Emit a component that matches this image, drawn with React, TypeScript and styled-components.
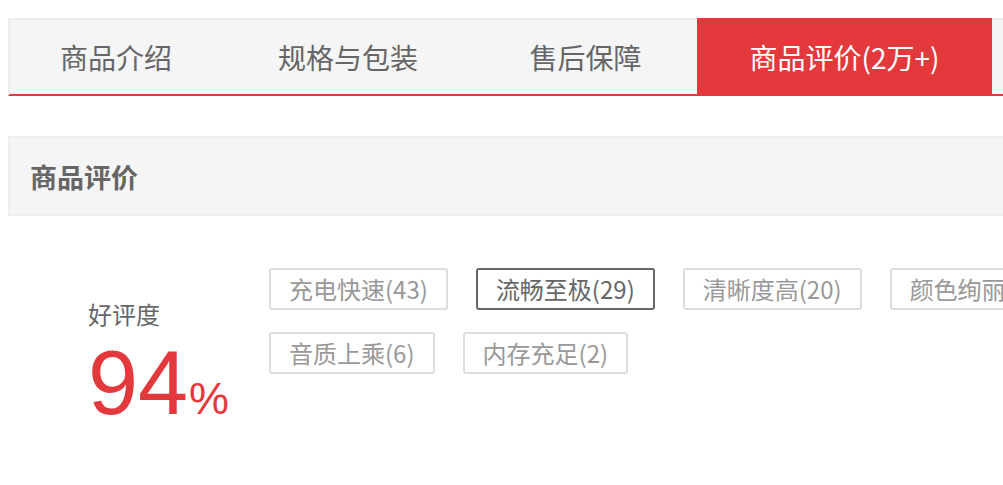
import styled, { createGlobalStyle } from 'styled-components'

const GlobalStyle = createGlobalStyle`
	html, body {
		margin: 0;
		padding: 0;
		background: #fff;
		overflow: hidden;
	}
	body {
		font-family: "Noto Sans CJK SC", "Microsoft YaHei", sans-serif;
		color: #666;
	}
`

const red = '#e4393c'

const Page = styled.div`
	width: 1190px;
	padding: 18px 0 0 8px;
`

const TabBar = styled.ul`
	display: flex;
	margin: 0;
	padding: 0;
	list-style: none;
	background: #f5f5f5;
	border-left: 2px solid #eee;
	border-bottom: 2px solid ${red};
`

interface TabProps {
	$w: number
	$active?: boolean
}

const Tab = styled.li<TabProps>`
	width: ${({ $w }) => $w}px;
	height: 74px;
	border-top: 2px solid ${({ $active }) => ($active ? red : '#eee')};
	background: ${({ $active }) => ($active ? red : 'transparent')};
	color: ${({ $active }) => ($active ? '#fff' : '#666')};
	font-size: 28px;
	line-height: 74px;
	text-align: center;
	white-space: nowrap;
	cursor: pointer;
`

const TabFill = styled.li`
	flex: 1;
	border-top: 2px solid #eee;
`

const SectionHead = styled.div`
	margin-top: 40px;
	height: 76px;
	padding: 0 20px;
	background: #f5f5f5;
	border: 2px solid #eee;
	display: flex;
	align-items: center;

	h3 {
		margin: 0;
		font-size: 27px;
		font-weight: 700;
		color: #666;
		line-height: 1;
	}
`

const Summary = styled.div`
	display: flex;
	padding-top: 52px;
`

const Rate = styled.div`
	width: 181px;
	padding: 34px 0 0 80px;
	flex-shrink: 0;
`

const RateLabel = styled.div`
	font-size: 24px;
	line-height: 24px;
	color: #666;
`

const RateValue = styled.div`
	display: flex;
	align-items: baseline;
	margin-top: 12px;
	color: ${red};
	font-family: "Liberation Sans", Arial, sans-serif;
	font-size: 90px;
	line-height: 90px;

	span {
		font-size: 45px;
		margin-left: 1px;
	}
`

const Tags = styled.div`
	display: flex;
	flex-wrap: wrap;
	gap: 22px 28px;
	width: 900px;
	align-content: flex-start;
`

interface TagProps {
	$selected?: boolean
}

const Tag = styled.span<TagProps>`
	display: inline-block;
	height: 38px;
	padding: 0 18px;
	border: 2px solid ${({ $selected }) => ($selected ? '#666' : '#ddd')};
	border-radius: 3px;
	color: ${({ $selected }) => ($selected ? '#666' : '#999')};
	font-size: 24px;
	line-height: 38px;
	white-space: nowrap;
	cursor: pointer;
`

const tabs = [
	{ label: '商品介绍', w: 212 },
	{ label: '规格与包装', w: 252 },
	{ label: '售后保障', w: 223 },
	{ label: '商品评价(2万+)', w: 295, active: true },
]

const tags = [
	{ label: '充电快速(43)' },
	{ label: '流畅至极(29)', selected: true },
	{ label: '清晰度高(20)' },
	{ label: '颜色绚丽(12)' },
	{ label: '音质上乘(6)' },
	{ label: '内存充足(2)' },
]

export default function App() {
	return (
		<>
			<GlobalStyle />
			<Page>
				<TabBar>
					{tabs.map((t) => (
						<Tab key={t.label} $w={t.w} $active={t.active}>
							{t.label}
						</Tab>
					))}
					<TabFill />
				</TabBar>

				<SectionHead>
					<h3>商品评价</h3>
				</SectionHead>

				<Summary>
					<Rate>
						<RateLabel>好评度</RateLabel>
						<RateValue>
							94<span>%</span>
						</RateValue>
					</Rate>
					<Tags>
						{tags.map((t) => (
							<Tag key={t.label} $selected={t.selected}>
								{t.label}
							</Tag>
						))}
					</Tags>
				</Summary>
			</Page>
		</>
	)
}
